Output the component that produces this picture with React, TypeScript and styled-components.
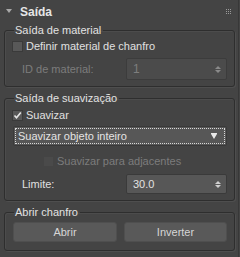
import * as React from "react";
import styled, { createGlobalStyle, css } from "styled-components";

const GlobalStyle = createGlobalStyle`
  html, body {
    margin: 0;
    padding: 0;
    background: #444444;
  }
  body {
    font-family: "Liberation Sans", Arial, sans-serif;
    font-size: 11px;
    color: #dcdcdc;
  }
`;

const Panel = styled.div`
  width: 239px;
  height: 257px;
  box-sizing: border-box;
  background: #444444;
  border-right: 1px solid #383838;
  display: flex;
  flex-direction: column;
`;

const Header = styled.div`
  height: 23px;
  display: flex;
  align-items: center;
  padding: 0 7px 0 6px;
  gap: 8px;
`;

const Caret = styled.span`
  width: 0;
  height: 0;
  margin-top: -1px;
  border-left: 3px solid transparent;
  border-right: 3px solid transparent;
  border-top: 4px solid #a8a8a8;
`;

const Title = styled.span`
  font-weight: bold;
  font-size: 12px;
  color: #e6e6e6;
  flex: 1;
`;

const Grip = styled.span`
  display: grid;
  grid-template-columns: repeat(3, 1px);
  grid-auto-rows: 1px;
  gap: 1px;
  margin-top: -1px;
  i {
    width: 1px;
    height: 1px;
    background: #9a9a9a;
  }
`;

const Body = styled.div`
  display: flex;
  flex-direction: column;
  gap: 4px;
  padding: 0 4px 0 4px;
`;

const Group = styled.fieldset<{ $pt: number; $pb: number }>`
  margin: 0;
  min-width: 0;
  border: 1px solid #2e2e2e;
  box-shadow: inset 1px 1px 0 #4c4c4c, 1px 1px 0 #4e4e4e;
  border-radius: 3px;
  padding: ${p => p.$pt}px 7px ${p => p.$pb}px 7px;
  display: flex;
  flex-direction: column;
  width: 231px;
  box-sizing: border-box;
`;

const Legend = styled.legend`
  padding: 0 2px 0 1px;
  margin-left: 2px;
  line-height: 14px;
  font-size: 11px;
  color: #e2e2e2;
`;

const CheckRow = styled.label<{ $disabled?: boolean; $indent?: number; $mt?: number }>`
  display: flex;
  align-items: center;
  gap: 3px;
  height: 12px;
  margin-left: ${p => p.$indent || 0}px;
  margin-top: ${p => p.$mt || 0}px;
  font-size: 11px;
  color: ${p => (p.$disabled ? "#7c7c7c" : "#e0e0e0")};
`;

const Box = styled.span<{ $disabled?: boolean }>`
  width: 11px;
  height: 11px;
  box-sizing: border-box;
  background: ${p => (p.$disabled ? "#4a4a4a" : "#585858")};
  border: 1px solid ${p => (p.$disabled ? "#444" : "#3a3a3a")};
  display: flex;
  align-items: center;
  justify-content: center;
`;

const FieldRow = styled.div<{ $disabled?: boolean; $mt?: number }>`
  display: flex;
  align-items: center;
  justify-content: space-between;
  margin-top: ${p => p.$mt || 0}px;
  padding-left: 10px;
  color: ${p => (p.$disabled ? "#7c7c7c" : "#e0e0e0")};
`;

const Spinner = styled.div<{ $disabled?: boolean; $h: number }>`
  width: 101px;
  height: ${p => p.$h}px;
  box-sizing: border-box;
  border-radius: 2px;
  border: 1px solid ${p => (p.$disabled ? "#3c3c3c" : "#3a3a3a")};
  background: ${p => (p.$disabled ? "#4b4b4b" : "#575757")};
  display: flex;
  align-items: center;
  padding: 0 5px 0 6px;
  font-size: ${p => (p.$disabled ? 12 : 11)}px;
  color: ${p => (p.$disabled ? "#7e7e7e" : "#e2e2e2")};
  span {
    flex: 1;
  }
`;

const Arrows = styled.span<{ $disabled?: boolean }>`
  flex: 0 0 auto !important;
  display: flex;
  flex-direction: column;
  gap: 1px;
  ${p => {
    const c = p.$disabled ? "#8a8a8a" : "#cfcfcf";
    return css`
      &::before,
      &::after {
        content: "";
        width: 0;
        height: 0;
        border-left: 3px solid transparent;
        border-right: 3px solid transparent;
      }
      &::before {
        border-bottom: 3px solid ${c};
      }
      &::after {
        border-top: 3px solid ${c};
      }
    `;
  }}
`;

const Select = styled.div`
  margin-top: 5px;
  margin-left: 1px;
  height: 20px;
  box-sizing: border-box;
  border-radius: 2px;
  background: #575757;
  border: 1px solid #3a3a3a;
  padding: 1px;
  display: flex;
`;

const Focus = styled.div`
  flex: 1;
  display: flex;
  align-items: center;
  justify-content: space-between;
  outline: 1px dotted #d8d8d8;
  outline-offset: -1px;
  padding: 0 8px 0 3px;
  font-size: 11px;
  color: #e4e4e4;
`;

const SelectArrow = styled.span`
  width: 0;
  height: 0;
  border-left: 3px solid transparent;
  border-right: 3px solid transparent;
  border-top: 5px solid #e8e8e8;
  box-shadow: 0 -1px 0 0 #e8e8e8;
`;

const Buttons = styled.div`
  display: grid;
  grid-template-columns: 104px 103px;
  justify-content: space-between;
  margin-left: 1px;
`;

const Button = styled.button`
  height: 20px;
  border: 1px solid #4f4f4f;
  border-radius: 3px;
  background: #595959;
  color: #d6d6d6;
  font-family: "Liberation Sans", Arial, sans-serif;
  font-size: 11px;
  padding: 0;
`;

function Check({ checked, disabled }: { checked?: boolean; disabled?: boolean }) {
  return (
    <Box $disabled={disabled}>
      {checked && (
        <svg width="9" height="9" viewBox="0 0 9 9">
          <path d="M1.5 4.5 L3.5 6.8 L7.8 1.5" stroke="#e6e6e6" strokeWidth="1.6" fill="none" />
        </svg>
      )}
    </Box>
  );
}

export default function App() {
  return (
    <>
      <GlobalStyle />
      <Panel>
        <Header>
          <Caret />
          <Title>Saída</Title>
          <Grip>
            {Array.from({ length: 9 }).map((_, i) => (
              <i key={i} />
            ))}
          </Grip>
        </Header>
        <Body>
          <Group $pt={3} $pb={6}>
            <Legend>Saída de material</Legend>
            <CheckRow>
              <Check />
              Definir material de chanfro
            </CheckRow>
            <FieldRow $disabled $mt={6}>
              ID de material:
              <Spinner $disabled $h={22}>
                <span>1</span>
                <Arrows $disabled />
              </Spinner>
            </FieldRow>
          </Group>
          <Group $pt={4} $pb={6}>
            <Legend>Saída de suavização</Legend>
            <CheckRow>
              <Check checked />
              Suavizar
            </CheckRow>
            <Select>
              <Focus>
                Suavizar objeto inteiro
                <SelectArrow />
              </Focus>
            </Select>
            <CheckRow $disabled $indent={31} $mt={9}>
              <Check disabled />
              Suavizar para adjacentes
            </CheckRow>
            <FieldRow $mt={7}>
              Limite:
              <Spinner $h={20}>
                <span>30.0</span>
                <Arrows />
              </Spinner>
            </FieldRow>
          </Group>
          <Group $pt={3} $pb={8}>
            <Legend>Abrir chanfro</Legend>
            <Buttons>
              <Button>Abrir</Button>
              <Button>Inverter</Button>
            </Buttons>
          </Group>
        </Body>
      </Panel>
    </>
  );
}
